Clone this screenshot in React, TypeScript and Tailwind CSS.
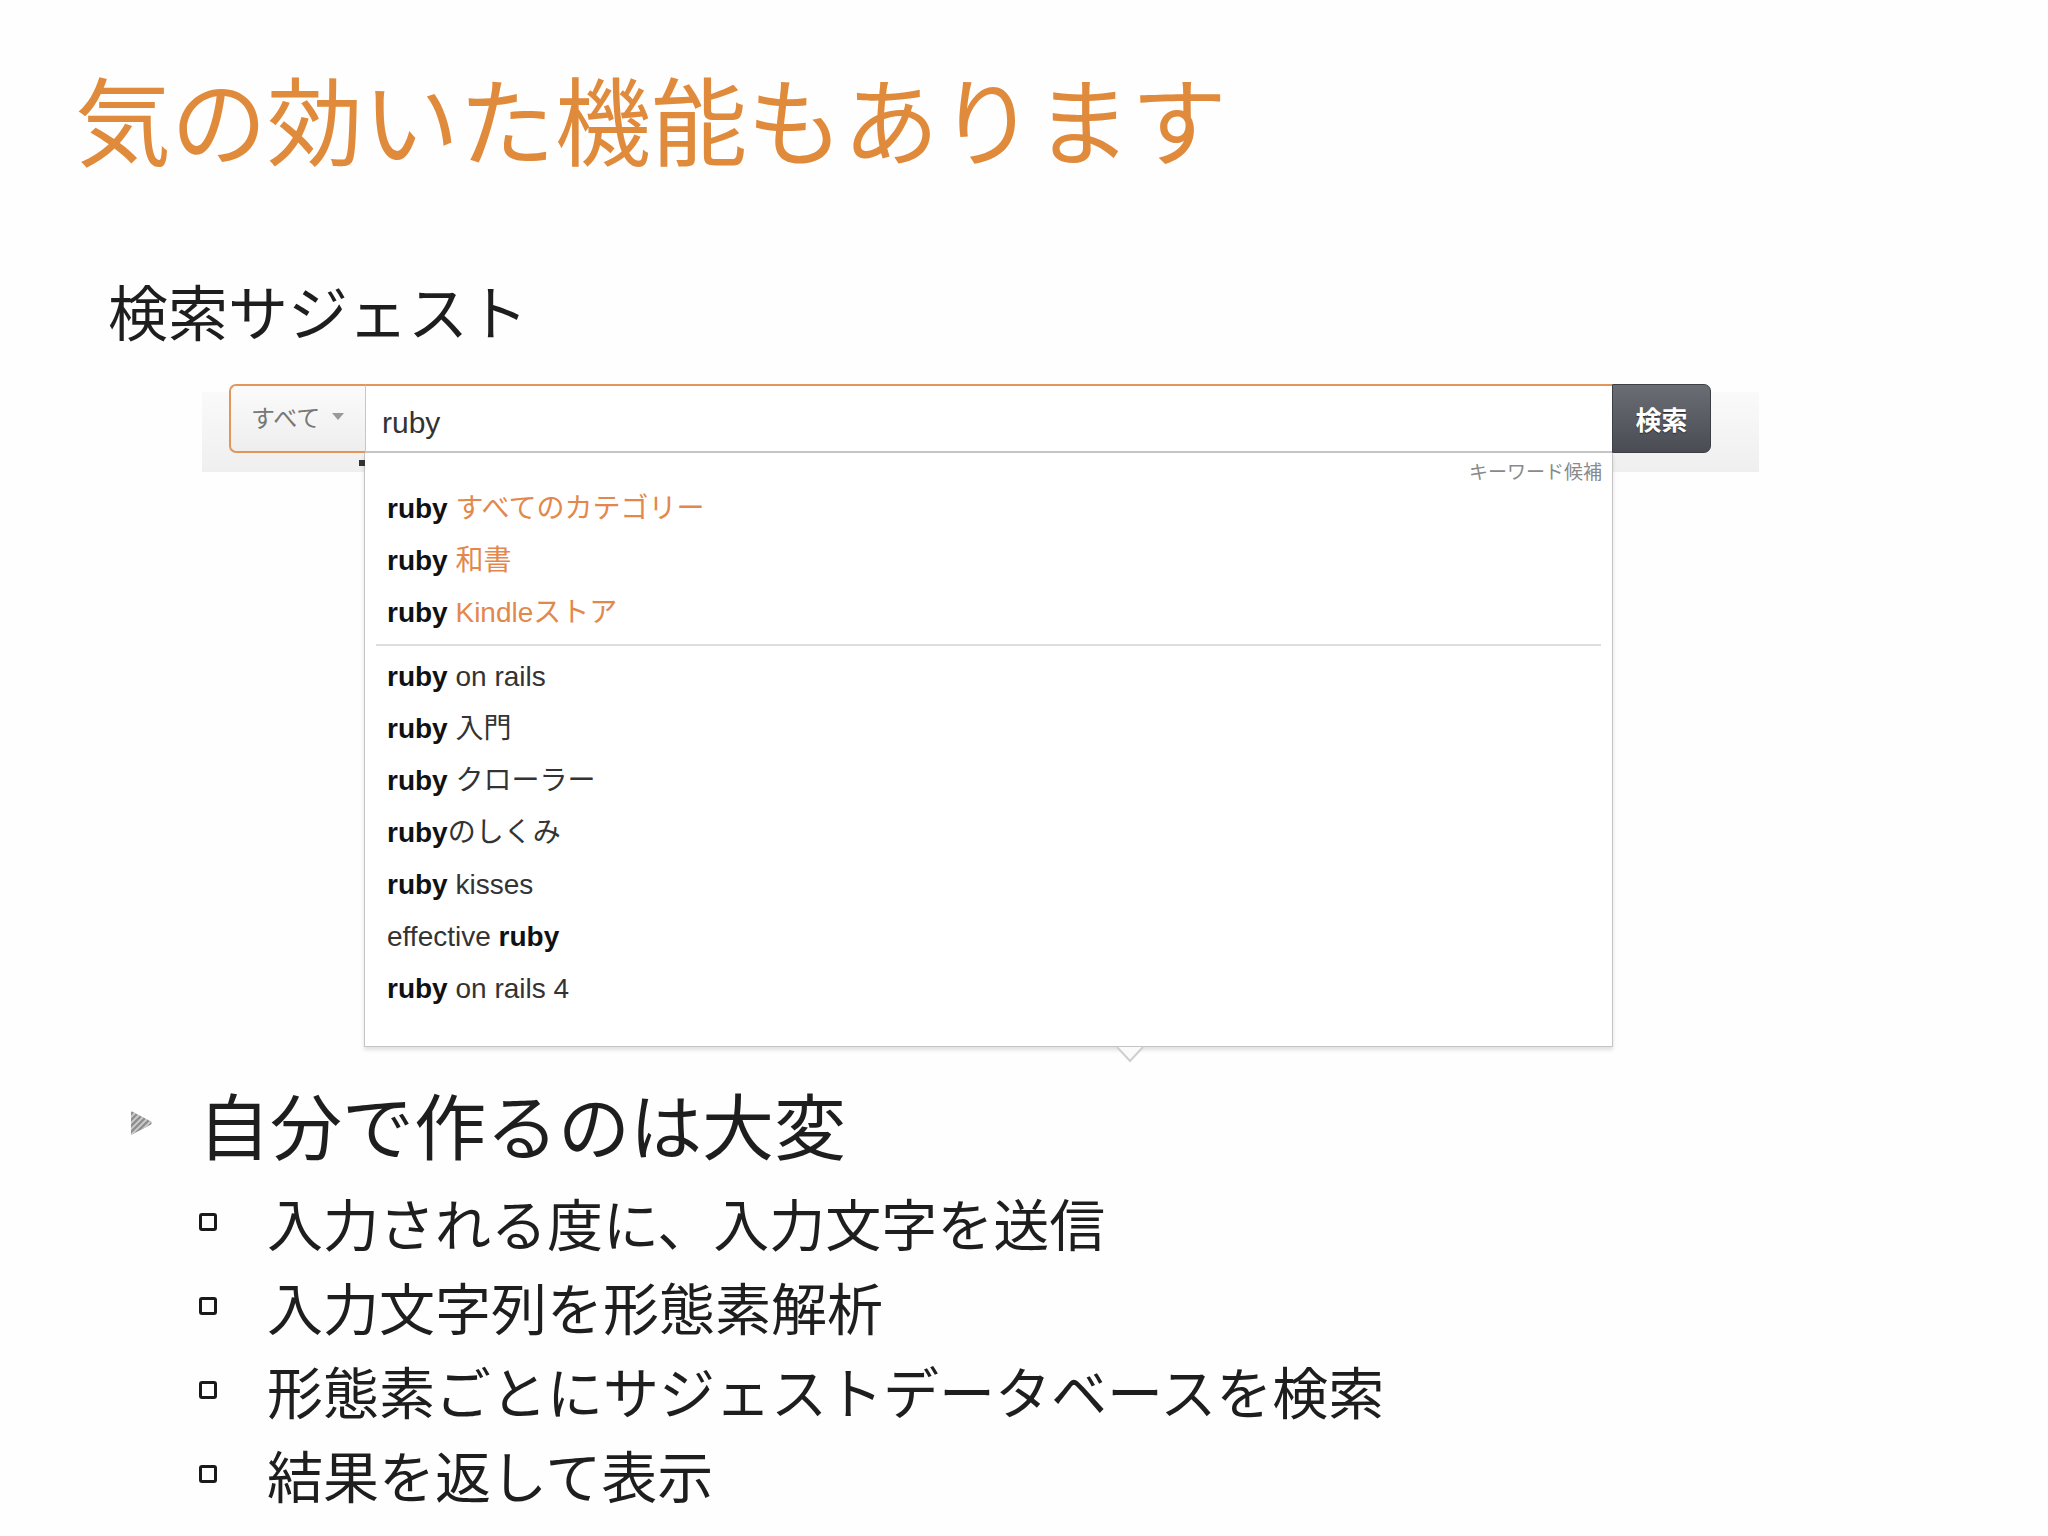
import React from 'react';

const jp = '"Noto Sans CJK JP", "Noto Sans", sans-serif';
const ui = '"Liberation Sans", "Noto Sans CJK JP", sans-serif';

type Suggestion = { pre?: string; bold: string; rest: string; orange?: boolean };

const categoryRows: Suggestion[] = [
  { bold: 'ruby', rest: ' すべてのカテゴリー', orange: true },
  { bold: 'ruby', rest: ' 和書', orange: true },
  { bold: 'ruby', rest: ' Kindleストア', orange: true },
];

const keywordRows: Suggestion[] = [
  { bold: 'ruby', rest: ' on rails' },
  { bold: 'ruby', rest: ' 入門' },
  { bold: 'ruby', rest: ' クローラー' },
  { bold: 'ruby', rest: 'のしくみ' },
  { bold: 'ruby', rest: ' kisses' },
  { pre: 'effective ', bold: 'ruby', rest: '' },
  { bold: 'ruby', rest: ' on rails 4' },
];

const subPoints = [
  '入力される度に、入力文字を送信',
  '入力文字列を形態素解析',
  '形態素ごとにサジェストデータベースを検索',
  '結果を返して表示',
];

/**
 * One row of the suggest list
 */
const SuggestRow: React.FC<{ row: Suggestion }> = ({ row }) => (
  <div className="h-[52px] px-[22px] text-[28px] leading-[52px] text-[#333] whitespace-pre">
    {row.pre && <span>{row.pre}</span>}
    <span className="font-bold text-[#111]">{row.bold}</span>
    <span className={row.orange ? 'text-[#e3884c]' : ''}>{row.rest}</span>
  </div>
);

/**
 * Striped triangle bullet (keynote style)
 */
const TriangleBullet = () => (
  <svg width="26" height="26" viewBox="0 0 26 26" className="shrink-0">
    <defs>
      <clipPath id="tri">
        <path d="M3 2.5 Q3 1 4.5 1.8 L23 11.6 Q24.5 13 23 14.4 L4.5 24.2 Q3 25 3 23.5 Z" />
      </clipPath>
    </defs>
    <path d="M3 2.5 Q3 1 4.5 1.8 L23 11.6 Q24.5 13 23 14.4 L4.5 24.2 Q3 25 3 23.5 Z" fill="#8f8f8f" />
    <g clipPath="url(#tri)" stroke="#cfcfcf" strokeWidth="1.8">
      <line x1="0" y1="10" x2="14" y2="-4" />
      <line x1="0" y1="16" x2="20" y2="-4" />
      <line x1="0" y1="22" x2="26" y2="-4" />
      <line x1="0" y1="28" x2="30" y2="-2" />
      <line x1="4" y1="30" x2="32" y2="2" />
    </g>
  </svg>
);

export default function App() {
  return (
    <div className="relative w-[2048px] h-[1536px] overflow-hidden bg-[#fefefe]" style={{ fontFamily: jp }}>
      {/* Slide title */}
      <h1 className="pt-[69px] pl-[75px] text-[96px] leading-none font-normal text-[#e08a3c] whitespace-nowrap">
        気の効いた機能もあります
      </h1>

      {/* Sub heading */}
      <div className="mt-[115px] pl-[108px] text-[60px] leading-none text-[#1e1e1e]">検索サジェスト</div>

      {/* Search bar screenshot */}
      <div className="mt-[52px] ml-[202px] flex h-[80px] w-[1557px] flex-col bg-gradient-to-b from-[#fafafa] to-[#efefef] pl-[27px]">
        <div className="-mt-[8px] flex h-[69px] w-[1482px]" style={{ fontFamily: ui }}>
          <div className="flex w-[136px] items-center gap-[12px] rounded-l-[7px] border-2 border-r-0 border-[#e4965a] bg-gradient-to-b from-[#fbfbfb] to-[#eeeeee] pb-[4px] pl-[20px]">
            <span className="text-[24px] text-[#777]" style={{ fontFamily: jp }}>すべて</span>
            <span className="h-0 w-0 border-x-[6px] border-t-[7px] border-x-transparent border-t-[#9a9a9a]" />
          </div>
          <div className="flex flex-1 items-center border-t-2 border-b-2 border-l border-t-[#e4965a] border-b-[#c6c6c6] border-l-[#c6c6c6] bg-white pl-[16px] pt-[8px]">
            <span className="text-[30px] text-[#333]">ruby</span>
          </div>
          <div className="flex w-[99px] items-center justify-center rounded-r-[7px] border border-[#3c3f44] bg-gradient-to-b from-[#6a6e74] to-[#494d53]">
            <span className="text-[26px] font-bold text-white [text-shadow:0_1px_1px_#2a2d31]" style={{ fontFamily: jp }}>
              検索
            </span>
          </div>
        </div>
      </div>

      {/* Suggest dropdown */}
      <div
        className="relative z-10 -mt-[19px] ml-[364px] h-[594px] w-[1249px] border border-t-0 border-[#c4c4c4] bg-white pt-[6px] shadow-[0_3px_4px_rgba(0,0,0,0.12)]"
        style={{ fontFamily: ui }}
      >
        <div className="h-[24px] pr-[10px] text-right text-[19px] leading-[24px] text-[#8a8a8a]" style={{ fontFamily: jp }}>
          キーワード候補
        </div>
        {categoryRows.map((row, i) => (
          <SuggestRow key={`c${i}`} row={row} />
        ))}
        <div className="mx-[11px] my-[5px] h-[2px] bg-[#dedede]" />
        {keywordRows.map((row, i) => (
          <SuggestRow key={`k${i}`} row={row} />
        ))}
        {/* small artifacts from the captured image */}
        <span className="absolute -left-[6px] top-[7px] h-[6px] w-[6px] bg-[#333]" />
        <svg width="30" height="18" viewBox="0 0 30 18" className="absolute left-[750px] -bottom-[18px]">
          <path d="M2 1 L15 15 L28 1" fill="#fafafa" stroke="#cfcfcf" strokeWidth="2" />
        </svg>
      </div>

      {/* Bullets */}
      <div className="mt-[40px] flex items-center pl-[128px]">
        <TriangleBullet />
        <span className="ml-[44px] text-[72px] leading-none text-[#1e1e1e]">自分で作るのは大変</span>
      </div>
      <ul className="mt-[21px] pl-[199px]">
        {subPoints.map((text) => (
          <li key={text} className="flex h-[84px] items-center">
            <span className="h-[18px] w-[18px] shrink-0 rounded-[3px] border-[3px] border-[#1a1a1a]" />
            <span className="ml-[50px] text-[56px] leading-[84px] text-[#1e1e1e] whitespace-nowrap">{text}</span>
          </li>
        ))}
      </ul>
    </div>
  );
}
